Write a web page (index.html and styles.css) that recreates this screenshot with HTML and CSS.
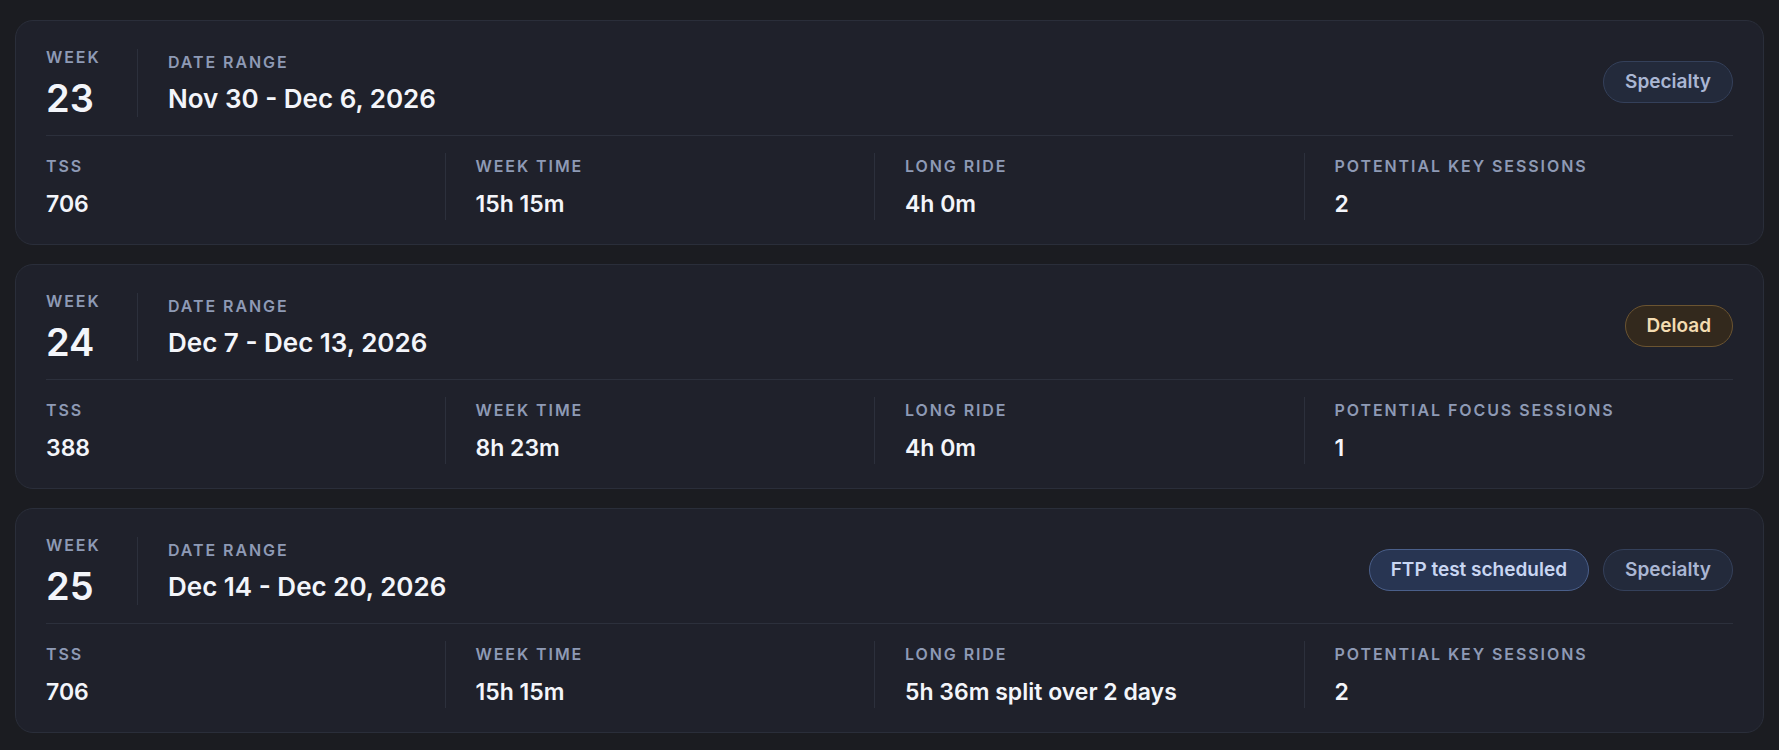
FILE: index.html
```html
<!DOCTYPE html>
<html lang="en">
<head>
    <meta charset="UTF-8">
    <meta name="viewport" content="width=device-width, initial-scale=1.0">
    <title>Training plan - weeks</title>
    <link rel="stylesheet" href="styles.css">
</head>
<body>
    <div class="week-list">
        <div class="week-card">
            <div class="week-top">
                <div class="week-num">
                    <div class="label">Week</div>
                    <div class="num">23</div>
                </div>
                <div class="week-range">
                    <div class="label">Date range</div>
                    <div class="range">Nov 30 - Dec 6, 2026</div>
                </div>
                <div class="tags">
                    <span class="tag">Specialty</span>
                </div>
            </div>
            <div class="week-stats">
                <div class="stat">
                    <div class="label">TSS</div>
                    <div class="value">706</div>
                </div>
                <div class="stat">
                    <div class="label">Week time</div>
                    <div class="value">15h 15m</div>
                </div>
                <div class="stat">
                    <div class="label">Long ride</div>
                    <div class="value">4h 0m</div>
                </div>
                <div class="stat">
                    <div class="label">Potential key sessions</div>
                    <div class="value">2</div>
                </div>
            </div>
        </div>

        <div class="week-card">
            <div class="week-top">
                <div class="week-num">
                    <div class="label">Week</div>
                    <div class="num">24</div>
                </div>
                <div class="week-range">
                    <div class="label">Date range</div>
                    <div class="range">Dec 7 - Dec 13, 2026</div>
                </div>
                <div class="tags">
                    <span class="tag tag-deload">Deload</span>
                </div>
            </div>
            <div class="week-stats">
                <div class="stat">
                    <div class="label">TSS</div>
                    <div class="value">388</div>
                </div>
                <div class="stat">
                    <div class="label">Week time</div>
                    <div class="value">8h 23m</div>
                </div>
                <div class="stat">
                    <div class="label">Long ride</div>
                    <div class="value">4h 0m</div>
                </div>
                <div class="stat">
                    <div class="label">Potential focus sessions</div>
                    <div class="value">1</div>
                </div>
            </div>
        </div>

        <div class="week-card">
            <div class="week-top">
                <div class="week-num">
                    <div class="label">Week</div>
                    <div class="num">25</div>
                </div>
                <div class="week-range">
                    <div class="label">Date range</div>
                    <div class="range">Dec 14 - Dec 20, 2026</div>
                </div>
                <div class="tags">
                    <span class="tag tag-ftp">FTP test scheduled</span>
                    <span class="tag">Specialty</span>
                </div>
            </div>
            <div class="week-stats">
                <div class="stat">
                    <div class="label">TSS</div>
                    <div class="value">706</div>
                </div>
                <div class="stat">
                    <div class="label">Week time</div>
                    <div class="value">15h 15m</div>
                </div>
                <div class="stat">
                    <div class="label">Long ride</div>
                    <div class="value">5h 36m split over 2 days</div>
                </div>
                <div class="stat">
                    <div class="label">Potential key sessions</div>
                    <div class="value">2</div>
                </div>
            </div>
        </div>
    </div>
</body>
</html>
```

FILE: styles.css
```css
* {
    box-sizing: border-box;
    margin: 0;
    padding: 0;
}

body {
    font-family: Inter, "Liberation Sans", sans-serif;
    background: #1b1c21;
    color: #f3f5fa;
    padding: 20px 15px;
}

.week-list {
    display: flex;
    flex-direction: column;
    gap: 19px;
}

.week-card {
    background: #1f212b;
    border: 1px solid #2a2e3a;
    border-radius: 18px;
    padding: 28px 30px 24px;
}

.label {
    font-size: 16px;
    line-height: 20px;
    font-weight: 600;
    letter-spacing: 0.12em;
    text-transform: uppercase;
    color: #8e9ab5;
}

/* top row: week number, date range, tags */
.week-top {
    display: flex;
    align-items: center;
    padding-bottom: 18px;
    border-bottom: 1px solid #2c303c;
}

.week-num {
    width: 92px;
    height: 68px;
    border-right: 1px solid #2c303c;
}

.week-num .label {
    line-height: 16px;
}

.week-num .num {
    margin-top: 13px;
    font-size: 38px;
    line-height: 40px;
    font-weight: 600;
}

.week-range {
    padding-left: 30px;
}

.week-range .range {
    margin-top: 11px;
    font-size: 26px;
    line-height: 32px;
    font-weight: 600;
}

.tags {
    margin-left: auto;
    margin-bottom: 3px;
    display: flex;
    gap: 14px;
}

.tag {
    padding: 9px 21px;
    border-radius: 999px;
    border: 1px solid #34405a;
    background: #232a3b;
    color: #aab6d3;
    font-size: 19px;
    line-height: 22px;
    font-weight: 600;
}

.tag-deload {
    background: #33291d;
    border-color: #6b5431;
    color: #f3dcb2;
}

.tag-ftp {
    background: #283552;
    border-color: #4a5f8a;
    color: #c9d6f2;
}

/* bottom row: stats */
.week-stats {
    display: flex;
    margin-top: 17px;
}

.stat {
    flex: 1;
    padding: 3px 0 1px;
}

.stat + .stat {
    border-left: 1px solid #2c303c;
    padding-left: 30px;
}

.stat .value {
    margin-top: 13px;
    font-size: 23px;
    line-height: 30px;
    font-weight: 600;
}
```
